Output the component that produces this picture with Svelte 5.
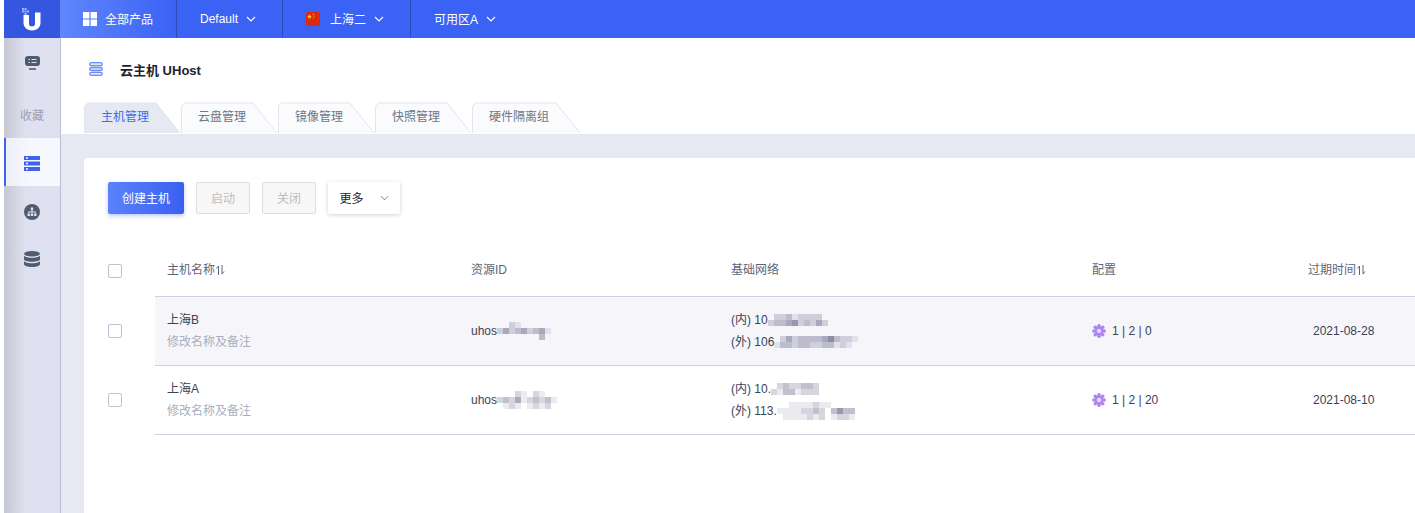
<script>
  const tabs = [
    { label: '主机管理', width: 97, active: true },
    { label: '云盘管理', width: 97 },
    { label: '镜像管理', width: 97 },
    { label: '快照管理', width: 97 },
    { label: '硬件隔离组', width: 109 }
  ];

  // digits are the darkness of one mosaic cell, 0 is see-through
  const hosts = [
    {
      name: '上海B',
      id: { text: 'uhos', blur: ['002100000', '242342341', '000000030'] },
      inner: { text: '(内) 10', blur: ['0223122220', '2334523242'] },
      outer: { text: '(外) 106', blur: ['024233334632210', '133233223312100'] },
      config: '1 | 2 | 0',
      expires: '2021-08-28',
      hover: true
    },
    {
      name: '上海A',
      id: { text: 'uhos', blur: ['0002102100', '2324123231', '0121012120'] },
      inner: { text: '(内) 10.', blur: ['0232233200', '2133122200'] },
      outer: { text: '(外) 113.', blur: ['00111121100000', '11112232035330', '01111212012210'] },
      config: '1 | 2 | 20',
      expires: '2021-08-10'
    }
  ];

  function tabPath(w) {
    return `M.5 31V6a5 5 0 0 1 5-5H${w - 25}L${w - 1} 31`;
  }

  function cellColor(d) {
    return d === '0' ? 'transparent' : `rgba(140, 140, 165, ${Number(d) * 0.18})`;
  }
</script>

{#snippet chevron()}
  <svg class="chevron" width="10" height="6" viewBox="0 0 10 6"><path d="M1 1l4 4 4-4" fill="none" stroke="currentColor" stroke-width="1.2" /></svg>
{/snippet}

{#snippet sort()}
  <svg class="sort" width="9" height="10" viewBox="0 0 9 10"><path d="M2.5 10V1L.5 3.500M6 0v9l2-2.500" fill="none" stroke="currentColor" /></svg>
{/snippet}

{#snippet masked(part)}
  <span class="masked">
    {part.text}<span class="mosaic">
      {#each part.blur as row}
        <span class="mosaic-row">
          {#each row.split('') as d}
            <i style={`background:${cellColor(d)}`}></i>
          {/each}
        </span>
      {/each}
    </span>
  </span>
{/snippet}

<div class="page">
  <header class="topbar">
    <div class="logo">
      <svg width="20" height="24" viewBox="0 0 20 24">
        <path d="M1.500 8v8.500a8.500 7 0 0 0 17 0V5.500h-5.500v11a3 3 0 0 1-6 0V8z" fill="#fff" />
        <path d="M0 1h2v2H0zM2.500 1h2v2h-2zM0 3.500h2v2H0zM2.500 3.500h2v2h-2zM5 3.500h2v2H5zM2.500 6h2v2h-2z" fill="#fff" opacity=".55" />
      </svg>
    </div>
    <div class="nav-item products">
      <svg width="14" height="14" viewBox="0 0 14 14"><path d="M0 0h6.400v6.400H0zM7.600 0H14v6.400H7.600zM0 7.600h6.400V14H0zM7.600 7.600H14V14H7.600z" fill="#fff" /></svg>
      <span>全部产品</span>
    </div>
    <div class="nav-item project"><span>Default</span>{@render chevron()}</div>
    <div class="nav-item region">
      <svg class="flag" width="14" height="14" viewBox="0 0 14 14">
        <rect width="14" height="14" rx="2" fill="#dc2a12" />
        <path d="M3.500 2.200l.7 1.600 1.600.1-1.200 1.100.4 1.600-1.500-.9-1.500.9.4-1.600L1.200 3.900l1.600-.1z" fill="#f8d21a" />
        <circle cx="7.200" cy="2.200" r=".6" fill="#f8d21a" />
        <circle cx="8.200" cy="4" r=".6" fill="#f8d21a" />
        <circle cx="7.200" cy="6" r=".6" fill="#f8d21a" />
      </svg>
      <span>上海二</span>{@render chevron()}
    </div>
    <div class="nav-item zone"><span>可用区A</span>{@render chevron()}</div>
  </header>

  <div class="body">
    <aside class="sidebar">
      <div class="side-item first">
        <svg width="15" height="14" viewBox="0 0 15 14">
          <rect width="15" height="10" rx="3" fill="#4f5b70" />
          <path d="M4 13h7" stroke="#4f5b70" stroke-width="1.600" />
          <path d="M3.500 3.500h1.500M6.500 3.500h5M3.500 6.500h1.500M6.500 6.500h5" stroke="#e0e1f0" />
        </svg>
      </div>
      <div class="side-label">收藏</div>
      <div class="side-item active">
        <svg width="16" height="15" viewBox="0 0 16 15">
          <path d="M0 0h16v4H0zM0 5.500h16v4H0zM0 11h16v4H0z" fill="#3d63f0" />
          <path d="M2 1.300h2v1.400H2zM2 6.800h2v1.400H2zM2 12.300h2v1.400H2z" fill="#f7f8fe" />
        </svg>
      </div>
      <div class="side-item">
        <svg width="16" height="16" viewBox="0 0 16 16">
          <circle cx="8" cy="8" r="8" fill="#4f5b70" />
          <path d="M6.800 3.500h2.400v2.400H6.800zM3.500 9.500h2.400v2.400H3.500zM6.800 9.500h2.400v2.400H6.800zM10.100 9.500h2.400v2.400h-2.400z" fill="#e0e1f0" />
          <path d="M8 6v3.500M4.700 9.500V7.800h6.600v1.700" fill="none" stroke="#e0e1f0" />
        </svg>
      </div>
      <div class="side-item">
        <svg width="16" height="16" viewBox="0 0 16 16">
          <ellipse cx="8" cy="2.800" rx="8" ry="2.800" fill="#4f5b70" />
          <path d="M0 4.800C1.500 6.300 4.500 6.800 8 6.800s6.500-.5 8-2v3.400c0 1.500-3.600 2.500-8 2.500S0 9.700 0 8.200z" fill="#4f5b70" />
          <path d="M0 10.300c1.500 1.500 4.500 2 8 2s6.500-.5 8-2v3c0 1.500-3.600 2.700-8 2.700s-8-1.200-8-2.700z" fill="#4f5b70" />
        </svg>
      </div>
    </aside>

    <main class="main">
      <div class="head">
        <div class="title">
          <svg width="14" height="14" viewBox="0 0 14 14" fill="#dfe6fd" stroke="#6d8df5" stroke-width="1.300">
            <rect x=".7" y=".7" width="12.600" height="3" rx="1.500" />
            <rect x=".7" y="5.500" width="12.600" height="3" rx="1.500" />
            <rect x=".7" y="10.300" width="12.600" height="3" rx="1.500" />
          </svg>
          <h1>云主机 UHost</h1>
        </div>
        <nav class="tabs">
          {#each tabs as tab}
            <div class="tab" class:active={tab.active} style={`width:${tab.width}px`}>
              <svg class="tab-shape" width={tab.width + 1} height="32" viewBox={`0 0 ${tab.width + 1} 32`}>
                <path d={tabPath(tab.width)} />
              </svg>
              <span>{tab.label}</span>
            </div>
          {/each}
        </nav>
      </div>

      <section class="content">
        <div class="card">
          <div class="toolbar">
            <button class="primary">创建主机</button>
            <button class="disabled">启动</button>
            <button class="disabled">关闭</button>
            <button class="more"><span>更多</span>{@render chevron()}</button>
          </div>

          <div class="row table-head">
            <div class="check-cell"><span class="checkbox"></span></div>
            <div class="col name">主机名称{@render sort()}</div>
            <div class="col id">资源ID</div>
            <div class="col net">基础网络</div>
            <div class="col config">配置</div>
            <div class="col expires">过期时间{@render sort()}</div>
          </div>

          {#each hosts as host}
            <div class="row host">
              <div class="check-cell"><span class="checkbox"></span></div>
              <div class="cells" class:hover={host.hover}>
                <div class="col name">
                  <div>{host.name}</div>
                  <div class="remark">修改名称及备注</div>
                </div>
                <div class="col id">{@render masked(host.id)}</div>
                <div class="col net">
                  <div>{@render masked(host.inner)}</div>
                  <div>{@render masked(host.outer)}</div>
                </div>
                <div class="col config">
                  <svg width="14" height="14" viewBox="0 0 14 14">
                    <g fill="#ac83f0">
                      <circle cx="7" cy="1.800" r="1.700" />
                      <circle cx="7" cy="12.200" r="1.700" />
                      <circle cx="1.800" cy="7" r="1.700" />
                      <circle cx="12.200" cy="7" r="1.700" />
                      <circle cx="3.300" cy="3.300" r="1.800" />
                      <circle cx="10.700" cy="3.300" r="1.800" />
                      <circle cx="3.300" cy="10.700" r="1.800" />
                      <circle cx="10.700" cy="10.700" r="1.800" />
                      <circle cx="7" cy="7" r="4.500" />
                    </g>
                    <circle cx="7" cy="7" r="2.300" fill="#e3d6fa" />
                  </svg>
                  <span>{host.config}</span>
                </div>
                <div class="col expires"><span class="date">{host.expires}</span></div>
              </div>
            </div>
          {/each}
        </div>
      </section>
    </main>
  </div>
</div>

<style>
  :global(body) {
    margin: 0;
    background: #fff;
  }

  .page {
    width: 1411px;
    height: 513px;
    margin-left: 4px;
    overflow: hidden;
    display: flex;
    flex-direction: column;
    font-family: 'Liberation Sans', 'Noto Sans CJK SC', sans-serif;
    font-size: 12px;
    color: #3c4354;
    position: relative;
  }

  .topbar {
    height: 38px;
    flex: none;
    display: flex;
    background: #3a62f5;
    color: #fff;
  }

  .logo {
    width: 56px;
    display: flex;
    align-items: center;
    justify-content: center;
    background: #3557e0;
  }

  .logo svg {
    margin-bottom: 1px;
  }

  .nav-item {
    display: flex;
    align-items: center;
    border-right: 1px solid #2c4ab8;
    box-sizing: border-box;
  }

  .nav-item span {
    margin-bottom: 1px;
  }

  .products {
    width: 117px;
    padding-left: 23px;
    gap: 8px;
    background: linear-gradient(90deg, #6087fb, #3a62f5);
  }

  .project {
    width: 106px;
    padding-left: 23px;
    gap: 8px;
  }

  .region {
    width: 128px;
    padding-left: 23px;
  }

  .region span {
    margin: 0 8px 1px 10px;
  }

  .zone {
    border-right: 0;
    padding-left: 23px;
    gap: 8px;
  }

  .chevron {
    color: inherit;
    flex: none;
  }

  .body {
    flex: 1;
    min-height: 0;
    display: flex;
  }

  .sidebar {
    width: 57px;
    box-sizing: border-box;
    flex: none;
    background: linear-gradient(90deg, #c6c7d3, #e0e1f0 22px);
    border-right: 1px solid #b9c0d6;
    display: flex;
    flex-direction: column;
  }

  .side-item {
    height: 48px;
    display: flex;
    align-items: center;
    justify-content: center;
  }

  .side-item.first {
    height: 50px;
  }

  .side-label {
    height: 50px;
    padding-top: 2px;
    box-sizing: border-box;
    display: flex;
    align-items: center;
    justify-content: center;
    color: #9a9fb2;
  }

  .side-item.active {
    background: linear-gradient(90deg, #eeeff7, #f7f8fe 24px);
    border-left: 2px solid #3d63f0;
    padding: 2px 2px 0 0;
    box-sizing: border-box;
  }

  .side-item:nth-child(n + 4) {
    padding-top: 3px;
    box-sizing: border-box;
  }

  .side-item:nth-child(n + 5) {
    padding-top: 2px;
  }

  .main {
    flex: 1;
    min-width: 0;
    display: flex;
    flex-direction: column;
  }

  .head {
    height: 96px;
    flex: none;
    box-sizing: border-box;
    padding-left: 23px;
    display: flex;
    flex-direction: column;
    position: relative;
  }

  .title {
    height: 64px;
    padding: 0 0 2px 5px;
    box-sizing: border-box;
    display: flex;
    align-items: center;
    gap: 17px;
  }

  .title h1 {
    margin: 0;
    font-size: 13px;
    font-weight: 700;
    color: #1c2230;
  }

  .tabs {
    display: flex;
    height: 32px;
  }

  .tab {
    position: relative;
    height: 32px;
    color: #6d7688;
    padding-left: 17px;
    box-sizing: border-box;
    line-height: 31px;
  }

  .tab span {
    position: relative;
  }

  .tab.active {
    color: #3d6bea;
  }

  .tab-shape {
    position: absolute;
    left: 0;
    top: 0;
  }

  .tab-shape path {
    fill: #fafbfd;
    stroke: #e2e4f1;
  }

  .tab.active .tab-shape path {
    fill: #e6e9f2;
  }

  .content {
    flex: 1;
    min-height: 0;
    background: #e6e9f2;
    padding: 24px 0 0 23px;
  }

  .card {
    height: 400px;
    background: #fff;
    border-radius: 4px 0 0 4px;
    padding: 24px 0 0 24px;
    box-sizing: border-box;
  }

  .toolbar {
    display: flex;
    gap: 12px;
    height: 32px;
    margin-bottom: 31px;
  }

  button {
    font: inherit;
    height: 32px;
    border-radius: 2px;
    padding: 0 0 2px;
    box-sizing: border-box;
  }

  .primary {
    width: 76px;
    border: 0;
    color: #fff;
    background: linear-gradient(90deg, #5b82fb, #3a60f0);
    box-shadow: 0 2px 4px rgba(58, 96, 240, 0.35);
  }

  .disabled {
    width: 54px;
    border: 1px solid #dedede;
    background: #f7f7f7;
    color: #bdbdbd;
  }

  .more {
    width: 72px;
    border: 0;
    background: #fff;
    color: #1c2230;
    box-shadow: 0 1px 4px rgba(40, 50, 80, 0.22);
    display: flex;
    align-items: center;
    justify-content: center;
    gap: 16px;
  }

  .more .chevron {
    width: 9px;
    color: #5d6679;
    margin-top: 2px;
  }

  .more .chevron path {
    stroke-width: 0.9;
  }

  .row {
    display: flex;
  }

  .table-head {
    height: 51px;
    align-items: center;
    color: #5d6679;
  }

  .table-head .col {
    padding-bottom: 2px;
  }

  .check-cell {
    width: 47px;
    flex: none;
    display: flex;
    align-items: center;
  }

  .checkbox {
    width: 14px;
    height: 14px;
    box-sizing: border-box;
    border: 1px solid #bcc2d6;
    border-radius: 2px;
    background: #fff;
  }

  .host {
    height: 69px;
  }

  .cells {
    flex: 1;
    display: flex;
    align-items: center;
    border-top: 1px solid #ccd0e4;
    box-sizing: border-box;
  }

  .host:last-child .cells {
    border-bottom: 1px solid #ccd0e4;
    height: 70px;
  }

  .cells.hover {
    background: #f5f5fa;
  }

  .col {
    flex: none;
    box-sizing: border-box;
    padding-left: 12px;
    line-height: 22px;
  }

  .col.name {
    width: 304px;
  }

  .col.id {
    width: 260px;
  }

  .col.net {
    width: 361px;
  }

  .col.config {
    width: 216px;
    display: flex;
    align-items: center;
    gap: 6px;
  }

  .table-head .col.config {
    display: block;
  }

  .col.expires {
    width: 120px;
    white-space: nowrap;
  }

  .date {
    margin-left: 5px;
  }

  .remark {
    color: #a9afc0;
  }

  .sort {
    margin-left: 1px;
    vertical-align: -1px;
  }

  .masked {
    display: inline-flex;
    align-items: center;
    height: 22px;
  }

  .mosaic {
    display: inline-flex;
    flex-direction: column;
  }

  .mosaic-row {
    display: flex;
  }

  .mosaic-row i {
    width: 6px;
    height: 6px;
    display: block;
  }
</style>
